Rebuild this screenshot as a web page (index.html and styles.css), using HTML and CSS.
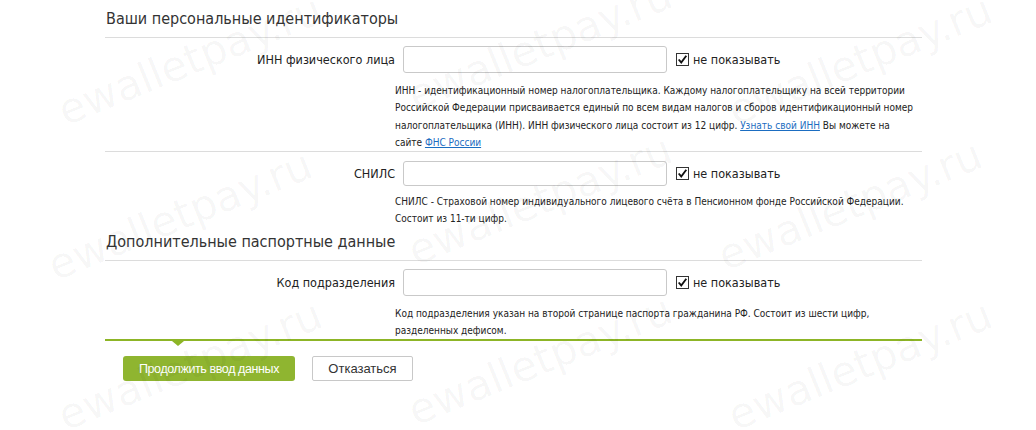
FILE: index.html
```html
<!DOCTYPE html>
<html lang="ru">
<head>
    <meta charset="UTF-8">
    <title>Персональные данные</title>
    <link rel="stylesheet" href="styles.css">
</head>
<body>
    <div class="page">
        <h2 class="section-title">Ваши персональные идентификаторы</h2>

        <div class="field field-sep">
            <div class="field-line">
                <label class="field-label" for="inn">ИНН физического лица</label>
                <input class="field-input" type="text" id="inn">
                <label class="hide-check"><span class="box"><svg viewBox="0 0 13 13" width="11" height="11"><path d="M2 6.5 L5 10 L11 2" fill="none" stroke="#111" stroke-width="2.2"/></svg></span>не показывать</label>
            </div>
            <p class="field-help">ИНН - идентификационный номер налогоплательщика. Каждому налогоплательщику на всей территории Российской Федерации присваивается единый по всем видам налогов и сборов идентификационный номер налогоплательщика (ИНН). ИНН физического лица состоит из 12 цифр. <a href="#">Узнать свой ИНН</a> Вы можете на сайте <a href="#">ФНС России</a></p>
        </div>

        <div class="field field-snils">
            <div class="field-line">
                <label class="field-label" for="snils">СНИЛС</label>
                <input class="field-input short" type="text" id="snils">
                <label class="hide-check"><span class="box"><svg viewBox="0 0 13 13" width="11" height="11"><path d="M2 6.5 L5 10 L11 2" fill="none" stroke="#111" stroke-width="2.2"/></svg></span>не показывать</label>
            </div>
            <p class="field-help">СНИЛС - Страховой номер индивидуального лицевого счёта в Пенсионном фонде Российской Федерации. Состоит из 11-ти цифр.</p>
        </div>

        <h2 class="section-title second">Дополнительные паспортные данные</h2>

        <div class="field field-last">
            <div class="field-line">
                <label class="field-label" for="code">Код подразделения</label>
                <input class="field-input" type="text" id="code">
                <label class="hide-check"><span class="box"><svg viewBox="0 0 13 13" width="11" height="11"><path d="M2 6.5 L5 10 L11 2" fill="none" stroke="#111" stroke-width="2.2"/></svg></span>не показывать</label>
            </div>
            <p class="field-help">Код подразделения указан на второй странице паспорта гражданина РФ. Состоит из шести цифр, разделенных дефисом.</p>
        </div>

        <div class="actions">
            <button class="btn btn-green">Продолжить ввод данных</button>
            <button class="btn btn-white">Отказаться</button>
        </div>
    </div>

    <div class="watermark">
        <span style="left:190px;top:60px">ewalletpay.ru</span>
        <span style="left:540px;top:45px">ewalletpay.ru</span>
        <span style="left:860px;top:60px">ewalletpay.ru</span>
        <span style="left:180px;top:215px">ewalletpay.ru</span>
        <span style="left:540px;top:200px">ewalletpay.ru</span>
        <span style="left:850px;top:205px">ewalletpay.ru</span>
        <span style="left:190px;top:365px">ewalletpay.ru</span>
        <span style="left:540px;top:360px">ewalletpay.ru</span>
        <span style="left:860px;top:365px">ewalletpay.ru</span>
    </div>
</body>
</html>
```

FILE: styles.css
```css
body {
    margin: 0;
    background: #fff;
    color: #222;
    font-family: "DejaVu Sans", Verdana, sans-serif;
    overflow: hidden;
}

.page {
    width: 817px;
    margin-left: 105px;
}

.section-title {
    margin: 0;
    padding: 9px 0 8px 1px;
    font-family: "DejaVu Sans Condensed", "DejaVu Sans", sans-serif;
    font-size: 16px;
    line-height: 20px;
    font-weight: normal;
    color: #333;
    border-bottom: 1px solid #dcdcdc;
}

.section-title.second {
    padding-top: 4px;
}

.field {
    padding-top: 9px;
}

.section-title + .field {
    padding-top: 8px;
}

.field-sep {
    border-bottom: 1px solid #dcdcdc;
}

.field-line {
    display: flex;
    align-items: center;
}

.field-label {
    width: 290px;
    text-align: right;
    font-family: "DejaVu Sans Condensed", "DejaVu Sans", sans-serif;
    font-size: 12.5px;
    color: #222;
}

.field-input {
    box-sizing: border-box;
    width: 264px;
    height: 27px;
    margin-left: 8px;
    border: 1px solid #c9c9c9;
    border-radius: 3px;
    background: #fff;
}

.field-input.short {
    height: 25px;
}

.hide-check {
    display: flex;
    align-items: center;
    margin-left: 9px;
    font-family: "DejaVu Sans Condensed", "DejaVu Sans", sans-serif;
    font-size: 12.5px;
    color: #222;
}

.box {
    box-sizing: border-box;
    width: 13px;
    height: 13px;
    margin-right: 4px;
    border: 1px solid #333;
    display: flex;
    align-items: center;
    justify-content: center;
}

.field-help {
    width: 518px;
    margin: 9px 0 0 290px;
    font-family: "DejaVu Sans Condensed", "DejaVu Sans", sans-serif;
    font-size: 10px;
    line-height: 17.3px;
    color: #222;
}

.field-snils .field-help {
    margin-top: 7px;
}

.field-help a {
    color: #1b6dc1;
}

.field-last {
    position: relative;
    border-bottom: 2px solid #8db526;
}

.field-last::after {
    content: "";
    position: absolute;
    left: 67px;
    bottom: -7px;
    border-left: 6px solid transparent;
    border-right: 6px solid transparent;
    border-top: 5px solid #8db526;
}

.actions {
    display: flex;
    gap: 17px;
    padding: 15px 0 0 18px;
}

.btn {
    height: 25px;
    font-family: "Liberation Sans", Arial, sans-serif;
    font-size: 13px;
    border-radius: 3px;
    cursor: pointer;
}

.btn-green {
    width: 172px;
    background: #8fb530;
    border: none;
    color: #fff;
    font-size: 12.5px;
    letter-spacing: -0.4px;
}

.btn-white {
    width: 101px;
    background: #fff;
    border: 1px solid #c8c8c8;
    border-radius: 2px;
    color: #333;
}

.watermark {
    position: absolute;
    top: 0;
    left: 0;
    width: 1036px;
    height: 430px;
    overflow: hidden;
    pointer-events: none;
}

.watermark span {
    position: absolute;
    transform: translate(-50%, -50%) rotate(-22deg);
    font-family: "DejaVu Sans", sans-serif;
    font-size: 42px;
    color: rgba(0, 0, 0, 0.04);
    white-space: nowrap;
}
```
